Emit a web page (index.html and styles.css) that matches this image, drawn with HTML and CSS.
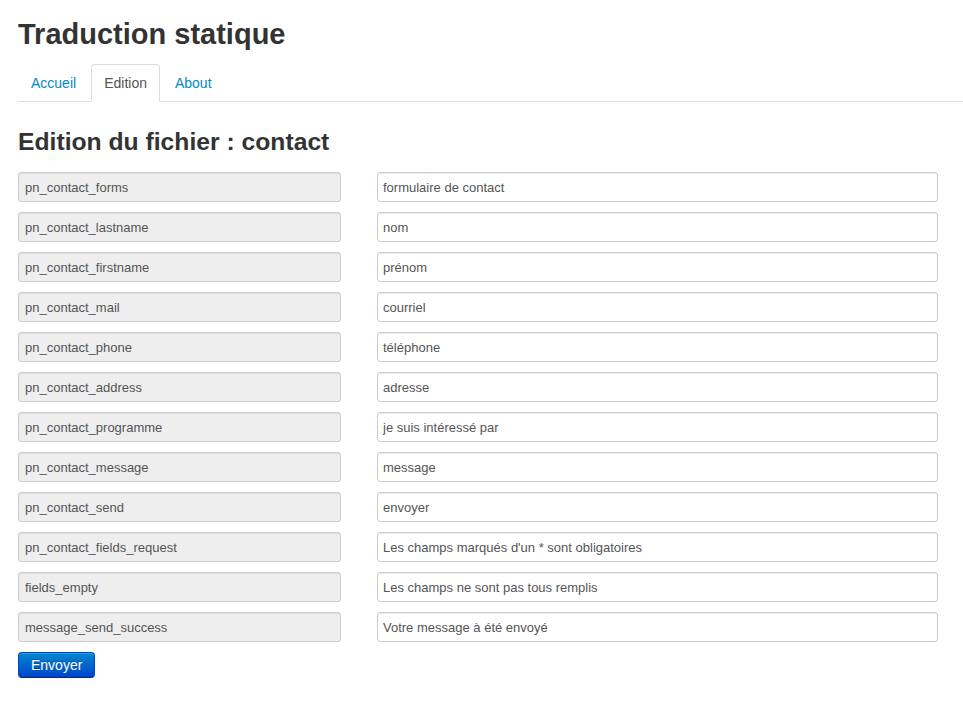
FILE: index.html
```html
<!DOCTYPE html>
<html lang="fr">
<head>
<meta charset="utf-8">
<title>Traduction statique</title>
<link rel="stylesheet" href="styles.css">
</head>
<body>
<div class="page">
  <h1 class="title">Traduction statique</h1>
  <ul class="tabs">
    <li><a href="#">Accueil</a></li>
    <li class="active"><a href="#">Edition</a></li>
    <li><a href="#">About</a></li>
  </ul>
  <h2 class="subtitle">Edition du fichier : contact</h2>
  <form class="grid">
    <input class="key" type="text" value="pn_contact_forms" disabled>
    <input class="val" type="text" value="formulaire de contact">
    <input class="key" type="text" value="pn_contact_lastname" disabled>
    <input class="val" type="text" value="nom">
    <input class="key" type="text" value="pn_contact_firstname" disabled>
    <input class="val" type="text" value="prénom">
    <input class="key" type="text" value="pn_contact_mail" disabled>
    <input class="val" type="text" value="courriel">
    <input class="key" type="text" value="pn_contact_phone" disabled>
    <input class="val" type="text" value="téléphone">
    <input class="key" type="text" value="pn_contact_address" disabled>
    <input class="val" type="text" value="adresse">
    <input class="key" type="text" value="pn_contact_programme" disabled>
    <input class="val" type="text" value="je suis intéressé par">
    <input class="key" type="text" value="pn_contact_message" disabled>
    <input class="val" type="text" value="message">
    <input class="key" type="text" value="pn_contact_send" disabled>
    <input class="val" type="text" value="envoyer">
    <input class="key" type="text" value="pn_contact_fields_request" disabled>
    <input class="val" type="text" value="Les champs marqués d'un * sont obligatoires">
    <input class="key" type="text" value="fields_empty" disabled>
    <input class="val" type="text" value="Les champs ne sont pas tous remplis">
    <input class="key" type="text" value="message_send_success" disabled>
    <input class="val" type="text" value="Votre message à été envoyé">
    <div class="actions"><button type="button" class="btn">Envoyer</button></div>
  </form>
</div>
</body>
</html>
```
FILE: styles.css
```css
html, body {
  margin: 0;
  padding: 0;
  background: #fff;
}
body {
  font-family: "Liberation Sans", Arial, Helvetica, sans-serif;
  color: #333;
  font-size: 14px;
  line-height: 20px;
}
.page {
  padding: 16px 0 0 18px;
}
.title {
  margin: 0 0 12px 0;
  font-size: 29px;
  line-height: 36px;
  font-weight: bold;
  color: #333;
}
.tabs {
  list-style: none;
  margin: 0;
  padding: 0;
  display: flex;
  border-bottom: 1px solid #ddd;
}
.tabs li {
  margin-right: 2px;
  margin-bottom: -1px;
}
.tabs a {
  display: block;
  padding: 8px 12px;
  line-height: 20px;
  color: #0088cc;
  text-decoration: none;
  border: 1px solid transparent;
  border-radius: 4px 4px 0 0;
}
.tabs .active a {
  color: #555;
  background: #fff;
  border-color: #ddd #ddd transparent #ddd;
}
.subtitle {
  margin: 22px 0 12px 0;
  font-size: 24.7px;
  line-height: 36px;
  font-weight: bold;
  color: #333;
}
.grid {
  display: grid;
  grid-template-columns: 323px 561px;
  column-gap: 36px;
  row-gap: 10px;
  margin: 0;
}
.grid input {
  box-sizing: border-box;
  height: 30px;
  width: 100%;
  margin: 0;
  padding: 4px 5px 4px 6px;
  font-family: "Liberation Sans", Arial, Helvetica, sans-serif;
  font-size: 13px;
  color: #555;
  border: 1px solid #ccc;
  border-radius: 3px;
  background: #fff;
  box-shadow: inset 0 1px 1px rgba(0,0,0,0.075);
}
.grid input.val {
  padding-left: 5px;
}
.grid input.key {
  background: #eee;
  color: #555;
}
.actions {
  grid-column: 1 / -1;
}
.btn {
  box-sizing: border-box;
  height: 26px;
  padding: 3px 12px;
  font-family: "Liberation Sans", Arial, Helvetica, sans-serif;
  font-size: 14px;
  line-height: 18px;
  color: #fff;
  text-shadow: 0 -1px 0 rgba(0,0,0,0.25);
  background: linear-gradient(to bottom, #0088cc, #0044cc);
  border: 1px solid #0044cc;
  border-bottom-color: #002a80;
  border-radius: 4px;
  box-shadow: inset 0 1px 0 rgba(255,255,255,0.2), 0 1px 2px rgba(0,0,0,0.05);
  cursor: pointer;
}
```
